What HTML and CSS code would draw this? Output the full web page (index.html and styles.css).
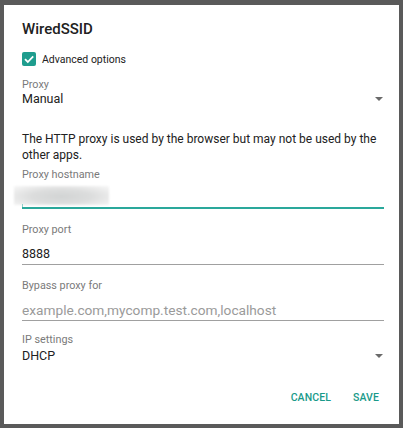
FILE: index.html
```html
<!DOCTYPE html>
<html>
<head>
<meta charset="utf-8">
<link rel="stylesheet" href="styles.css">
</head>
<body>
<div class="dialog">
  <h1 class="title">WiredSSID</h1>
  <label class="check">
    <span class="box"><svg width="14" height="14" viewBox="0 0 14 14"><path d="M3 7.2 L5.8 10 L11.2 4.4" fill="none" stroke="#fff" stroke-width="1.8"/></svg></span>
    <span class="check-text">Advanced options</span>
  </label>
  <div class="select">
    <div class="label">Proxy</div>
    <div class="select-row"><span class="value">Manual</span><span class="arrow"></span></div>
  </div>
  <p class="desc">The HTTP proxy is used by the browser but may not be used by the other apps.</p>
  <div class="field first">
    <div class="label">Proxy hostname</div>
    <div class="input focused"><span class="blur"></span><span class="cursor"></span></div>
  </div>
  <div class="field">
    <div class="label">Proxy port</div>
    <div class="input"><span class="value">8888</span></div>
  </div>
  <div class="field">
    <div class="label">Bypass proxy for</div>
    <div class="input"><span class="placeholder">example.com,mycomp.test.com,localhost</span></div>
  </div>
  <div class="select ip">
    <div class="label">IP settings</div>
    <div class="select-row"><span class="value">DHCP</span><span class="arrow"></span></div>
  </div>
  <div class="actions">
    <span class="btn">CANCEL</span>
    <span class="btn">SAVE</span>
  </div>
</div>
</body>
</html>
```

FILE: styles.css
```css
html, body {
  margin: 0;
  padding: 0;
  background: #5a5a5a;
  width: 403px;
  height: 428px;
  overflow: hidden;
  font-family: Roboto, "Noto Sans", sans-serif;
}
body {
  padding: 5px 4px 4px 4px;
  box-sizing: border-box;
}
.dialog {
  background: #fff;
  width: 395px;
  height: 419px;
  box-sizing: border-box;
  padding: 14px 15px 0 18px;
  display: flex;
  flex-direction: column;
}
.title {
  margin: 0;
  font-size: 15px;
  font-weight: 500;
  color: #212121;
  line-height: 20px;
}
.check {
  display: flex;
  align-items: center;
  margin-top: 13px;
  height: 14px;
}
.box {
  width: 14px;
  height: 14px;
  background: #1f9d8e;
  border-radius: 2px;
  display: flex;
}
.check-text {
  margin-left: 6px;
  font-size: 10.5px;
  color: #212121;
}
.label {
  font-size: 10.8px;
  color: #7a7a7a;
  line-height: 12px;
}
.select {
  margin-top: 13px;
}
.select-row {
  display: flex;
  align-items: center;
  justify-content: space-between;
  height: 16px;
}
.ip .select-row {
  margin-top: 2px;
}
.value {
  font-size: 12.5px;
  line-height: 16px;
  color: #212121;
}
.arrow {
  width: 0;
  height: 0;
  border-left: 4px solid transparent;
  border-right: 4px solid transparent;
  border-top: 4px solid #6a6a6a;
  margin-right: 1px;
}
.desc {
  margin: 24px 0 0 0;
  font-size: 12px;
  line-height: 16px;
  color: #212121;
}
.field {
  margin-top: 15px;
}
.field.first {
  margin-top: 6px;
}
.input {
  height: 16px;
  padding-top: 10px;
  padding-bottom: 2px;
  border-bottom: 1px solid #a0a0a0;
  display: flex;
  align-items: center;
  position: relative;
}
.input.focused {
  padding-bottom: 0;
  border-bottom: 2px solid #2aa89b;
}
.blur {
  position: absolute;
  left: -8px;
  top: 5px;
  width: 95px;
  height: 19px;
  background: radial-gradient(ellipse at 50% 55%, #d2d4d4 0%, #dcdddd 45%, #eeeeee 80%, #f8f8f8 100%);
  filter: blur(1px);
}
.cursor {
  position: absolute;
  left: 0;
  bottom: 0;
  width: 1px;
  height: 3px;
  background: #8fd0c8;
}
.placeholder {
  font-size: 13.7px;
  line-height: 16px;
  color: #9a9a9a;
}
.ip {
  margin-top: 13px;
}
.actions {
  display: flex;
  justify-content: flex-end;
  gap: 22px;
  margin-top: 27px;
  padding-right: 5px;
  line-height: 14px;
}
.btn {
  font-size: 10.5px;
  font-weight: 500;
  color: #1a9a8a;
  letter-spacing: 0.1px;
}
```
